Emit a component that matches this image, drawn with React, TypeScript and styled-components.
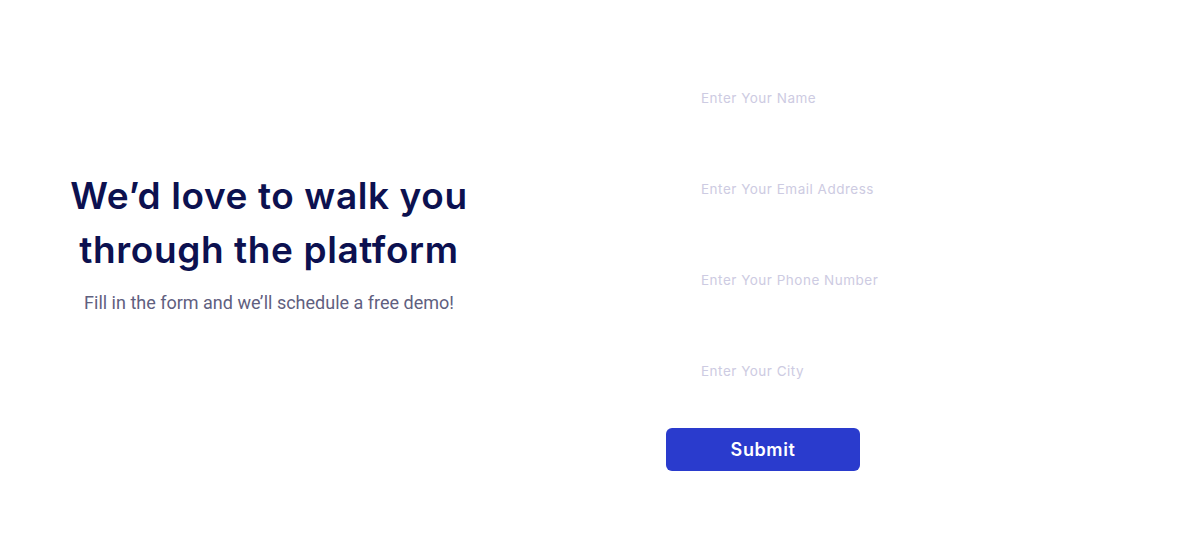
import React from 'react';
import styled, { createGlobalStyle } from 'styled-components';

const GlobalStyle = createGlobalStyle`
  html, body {
    margin: 0;
    padding: 0;
    background: #ffffff;
  }
  * {
    box-sizing: border-box;
  }
`;

const Page = styled.div`
  width: 1178px;
  height: 535px;
  display: grid;
  grid-template-columns: 538px 1fr;
  column-gap: 128px;
  background: #ffffff;
`;

const Intro = styled.section`
  display: flex;
  flex-direction: column;
  align-items: center;
  padding-top: 169px;
  text-align: center;
`;

const Heading = styled.h1`
  margin: 0;
  font-family: Inter, 'Noto Sans', sans-serif;
  font-weight: 600;
  font-size: 37px;
  line-height: 54px;
  letter-spacing: 0.6px;
  color: #0c1150;
`;

const Lead = styled.p`
  margin: 13px 0 0;
  font-family: Roboto, 'Noto Sans', sans-serif;
  font-size: 18px;
  line-height: 26px;
  color: #5f607f;
`;

const Form = styled.form`
  display: flex;
  flex-direction: column;
  align-items: flex-start;
  padding-top: 68px;
`;

const Input = styled.input`
  width: 420px;
  height: 60px;
  margin-bottom: 31px;
  padding: 0 0 0 35px;
  border: none;
  outline: none;
  background: transparent;
  font-family: Inter, 'Noto Sans', sans-serif;
  font-size: 13.5px;
  letter-spacing: 0.5px;
  color: #2a2b4d;

  &::placeholder {
    color: #cdcbe2;
  }

  &:last-of-type {
    margin-bottom: 27px;
  }
`;

const SubmitButton = styled.button`
  width: 194px;
  height: 43px;
  border: none;
  border-radius: 6px;
  background: #2a3bcd;
  color: #ffffff;
  font-family: Inter, 'Noto Sans', sans-serif;
  font-weight: 600;
  font-size: 18px;
  letter-spacing: 0.6px;
  cursor: pointer;
`;

const fields = [
  { name: 'name', type: 'text', placeholder: 'Enter Your Name' },
  { name: 'email', type: 'email', placeholder: 'Enter Your Email Address' },
  { name: 'phone', type: 'tel', placeholder: 'Enter Your Phone Number' },
  { name: 'city', type: 'text', placeholder: 'Enter Your City' },
];

const App = () => {
  return (
    <>
      <GlobalStyle />
      <Page>
        <Intro>
          <Heading>
            We’d love to walk you
            <br />
            through the platform
          </Heading>
          <Lead>Fill in the form and we’ll schedule a free demo!</Lead>
        </Intro>
        <Form onSubmit={(e) => e.preventDefault()}>
          {fields.map((f) => (
            <Input key={f.name} name={f.name} type={f.type} placeholder={f.placeholder} />
          ))}
          <SubmitButton type="submit">Submit</SubmitButton>
        </Form>
      </Page>
    </>
  );
};

export default App;
